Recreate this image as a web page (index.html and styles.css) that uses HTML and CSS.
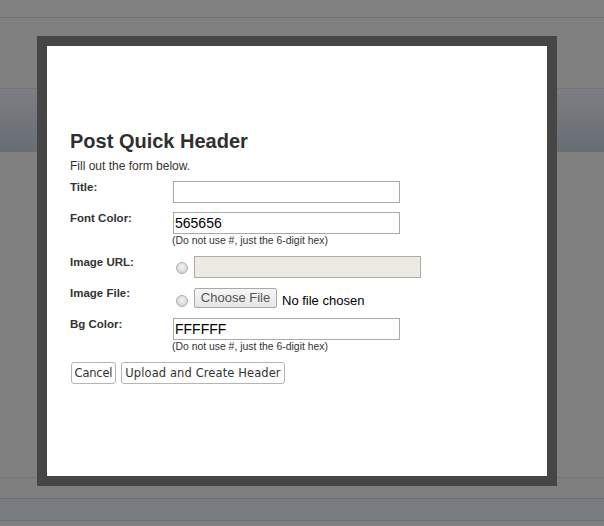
FILE: index.html
```html
<!DOCTYPE html>
<html>
<head>
<meta charset="utf-8">
<link rel="stylesheet" href="styles.css">
</head>
<body>
<div class="page">
  <div class="bar-top"></div>
  <div class="spacer-a"></div>
  <div class="band"></div>
  <div class="spacer-b"></div>
  <div class="thin-line"></div>
  <div class="spacer-c"></div>
  <div class="band-bottom"></div>
</div>

<div class="modal">
  <div class="modal-body">
    <h1 class="title">Post Quick Header</h1>
    <p class="intro">Fill out the form below.</p>
    <div class="form">
      <div class="row">
        <div class="label">Title:</div>
        <div class="field"><span class="input"></span></div>
      </div>
      <div class="row">
        <div class="label">Font Color:</div>
        <div class="field">
          <span class="input">565656</span>
          <div class="hint">(Do not use #, just the 6-digit hex)</div>
        </div>
      </div>
      <div class="row">
        <div class="label">Image URL:</div>
        <div class="field inline">
          <span class="radio r-url"></span>
          <span class="input disabled"></span>
        </div>
      </div>
      <div class="row">
        <div class="label">Image File:</div>
        <div class="field inline">
          <span class="radio r-file"></span>
          <span class="file-btn">Choose File</span>
          <span class="file-text">No file chosen</span>
        </div>
      </div>
      <div class="row">
        <div class="label">Bg Color:</div>
        <div class="field">
          <span class="input">FFFFFF</span>
          <div class="hint">(Do not use #, just the 6-digit hex)</div>
        </div>
      </div>
      <div class="actions">
        <span class="btn btn-cancel">Cancel</span>
        <span class="btn btn-upload">Upload and Create Header</span>
      </div>
    </div>
  </div>
</div>
</body>
</html>
```

FILE: styles.css
```css
html, body {
  margin: 0;
  padding: 0;
}
body {
  width: 604px;
  height: 526px;
  overflow: hidden;
  background: #808080;
  font-family: "Liberation Sans", Arial, sans-serif;
  position: relative;
}
.page {
  display: flex;
  flex-direction: column;
}
.bar-top {
  height: 17px;
  background: #818181;
  border-bottom: 1px solid #727272;
}
.spacer-a {
  height: 70px;
}
.band {
  height: 63px;
  border-top: 1px solid #707377;
  background: linear-gradient(#7c7e81, #676d74);
}
.spacer-b {
  height: 325px;
}
.thin-line {
  height: 1px;
  background: #757575;
}
.spacer-c {
  height: 20px;
  background: #7f7f7f;
}
.band-bottom {
  height: 21px;
  background: #797c81;
  border-top: 1px solid #6c7075;
  border-bottom: 1px solid #6c7075;
}

.modal {
  position: absolute;
  left: 37px;
  top: 36px;
  width: 500px;
  height: 430px;
  border: 10px solid #464646;
  background: #ffffff;
}
.modal-body {
  padding: 84px 22px 0 23px;
  color: #333333;
}
.title {
  margin: 0;
  font-size: 20px;
  font-weight: bold;
  line-height: 23px;
  color: #2f2f2f;
}
.intro {
  margin: 6px 0 0 0;
  font-size: 12px;
  line-height: 14px;
  color: #333333;
}
.form {
  margin-top: 8px;
  display: flex;
  flex-direction: column;
  gap: 9px;
}
.row {
  display: flex;
  align-items: flex-start;
}
.label {
  width: 103px;
  flex: none;
  font-size: 11.5px;
  font-weight: bold;
  line-height: 13px;
  color: #333333;
}
.field {
  display: flex;
  flex-direction: column;
  align-items: flex-start;
}
.field.inline {
  flex-direction: row;
  align-items: center;
  height: 22px;
}
.input {
  display: block;
  box-sizing: border-box;
  width: 227px;
  height: 22px;
  border: 1px solid #a9a9a9;
  background: #ffffff;
  padding: 0 1px;
  font-size: 14px;
  line-height: 20px;
  color: #000000;
}
.input.disabled {
  background: #ebebe4;
  border-color: #acaca6;
  margin-left: 6px;
}
.hint {
  margin: 1px 0 0 -1px;
  font-size: 10.4px;
  line-height: 12px;
  color: #333333;
}
.radio {
  box-sizing: border-box;
  width: 12px;
  height: 12px;
  border-radius: 50%;
  border: 1px solid #acacac;
  background: radial-gradient(circle at 50% 40%, #f4f4f4 0, #e2e2e2 45%, #cdcdcd 100%);
  margin-left: 3px;
  flex: none;
}
.r-url {
  margin-top: 2px;
}
.r-file {
  margin-top: 6px;
  margin-right: 6px;
}
.file-btn {
  box-sizing: border-box;
  height: 20px;
  width: 83px;
  border: 1px solid #a9a9a9;
  border-radius: 2px;
  background: linear-gradient(#f6f6f6, #e6e6e6);
  font-size: 13px;
  line-height: 18px;
  text-align: center;
  color: #555555;
}
.file-text {
  margin-left: 5px;
  margin-top: 4px;
  font-size: 13px;
  color: #000000;
}
.actions {
  display: flex;
  gap: 5px;
  margin-left: 1px;
}
.btn {
  box-sizing: border-box;
  height: 22px;
  border: 1px solid #b5b5b5;
  border-radius: 3px;
  background: #ffffff;
  font-family: "DejaVu Sans", Verdana, sans-serif;
  font-size: 11.5px;
  line-height: 20px;
  text-align: center;
  white-space: nowrap;
  color: #333333;
}
.btn-cancel {
  width: 45px;
  letter-spacing: -0.2px;
}
.btn-upload {
  width: 164px;
  letter-spacing: 0.1px;
}
```
